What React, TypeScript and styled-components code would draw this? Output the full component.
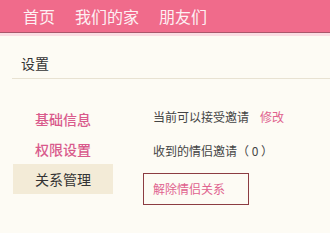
import styled, { createGlobalStyle } from "styled-components"

const GlobalStyle = createGlobalStyle`
  html, body {
    margin: 0;
    padding: 0;
    background: #fdfbf4;
    font-family: "Noto Sans CJK SC", "Noto Sans", sans-serif;
  }
`

const Page = styled.div`
  width: 330px;
  height: 233px;
  overflow: hidden;
  background: #fdfbf4;
`

const Header = styled.div`
  height: 32px;
  background: #f06b8b;
  border-bottom: 1px solid #a9566a;
  display: flex;
  align-items: center;
  padding-left: 23px;
  gap: 20px;
`

const HeaderStrip = styled.div`
  height: 3px;
  background: #fbdde3;
`

const NavLink = styled.span`
  color: #fdf0f3;
  font-size: 16px;
  line-height: 32px;
`

const Title = styled.div`
  margin-left: 12px;
  padding: 18px 0 0 9px;
  height: 24px;
  line-height: 18px;
  font-size: 14px;
  color: #333;
  border-bottom: 1px solid #e8e2d2;
`

const Body = styled.div`
  display: flex;
  padding-left: 13px;
`

const Sidebar = styled.div`
  width: 100px;
  padding-top: 25px;
  display: flex;
  flex-direction: column;
`

const SideItem = styled.div<{ $active?: boolean }>`
  height: 30px;
  line-height: 30px;
  padding-left: 22px;
  font-size: 14px;
  font-weight: ${({ $active }) => ($active ? 400 : 500)};
  color: ${({ $active }) => ($active ? "#333" : "#d95a8c")};
  background: ${({ $active }) => ($active ? "#f3ebd7" : "transparent")};
`

const Content = styled.div`
  margin-left: 30px;
  padding-top: 21px;
  display: flex;
  flex-direction: column;
  font-size: 12px;
  color: #444;
`

const Row = styled.div`
  height: 34px;
  line-height: 34px;
  padding-left: 10px;
`

const Link = styled.span`
  color: #e0628e;
  margin-left: 11px;
`

const DangerBox = styled.div`
  margin-top: 5px;
  width: 95px;
  height: 30px;
  line-height: 30px;
  padding-left: 9px;
  border: 1px solid #8c3c42;
  color: #e0628e;
`

export default function App() {
  return (
    <Page>
      <GlobalStyle />
      <Header>
        <NavLink>首页</NavLink>
        <NavLink>我们的家</NavLink>
        <NavLink>朋友们</NavLink>
      </Header>
      <HeaderStrip />
      <Title>设置</Title>
      <Body>
        <Sidebar>
          <SideItem>基础信息</SideItem>
          <SideItem>权限设置</SideItem>
          <SideItem $active>关系管理</SideItem>
        </Sidebar>
        <Content>
          <Row>
            当前可以接受邀请<Link>修改</Link>
          </Row>
          <Row>收到的情侣邀请（ 0 ）</Row>
          <DangerBox>解除情侣关系</DangerBox>
        </Content>
      </Body>
    </Page>
  )
}
